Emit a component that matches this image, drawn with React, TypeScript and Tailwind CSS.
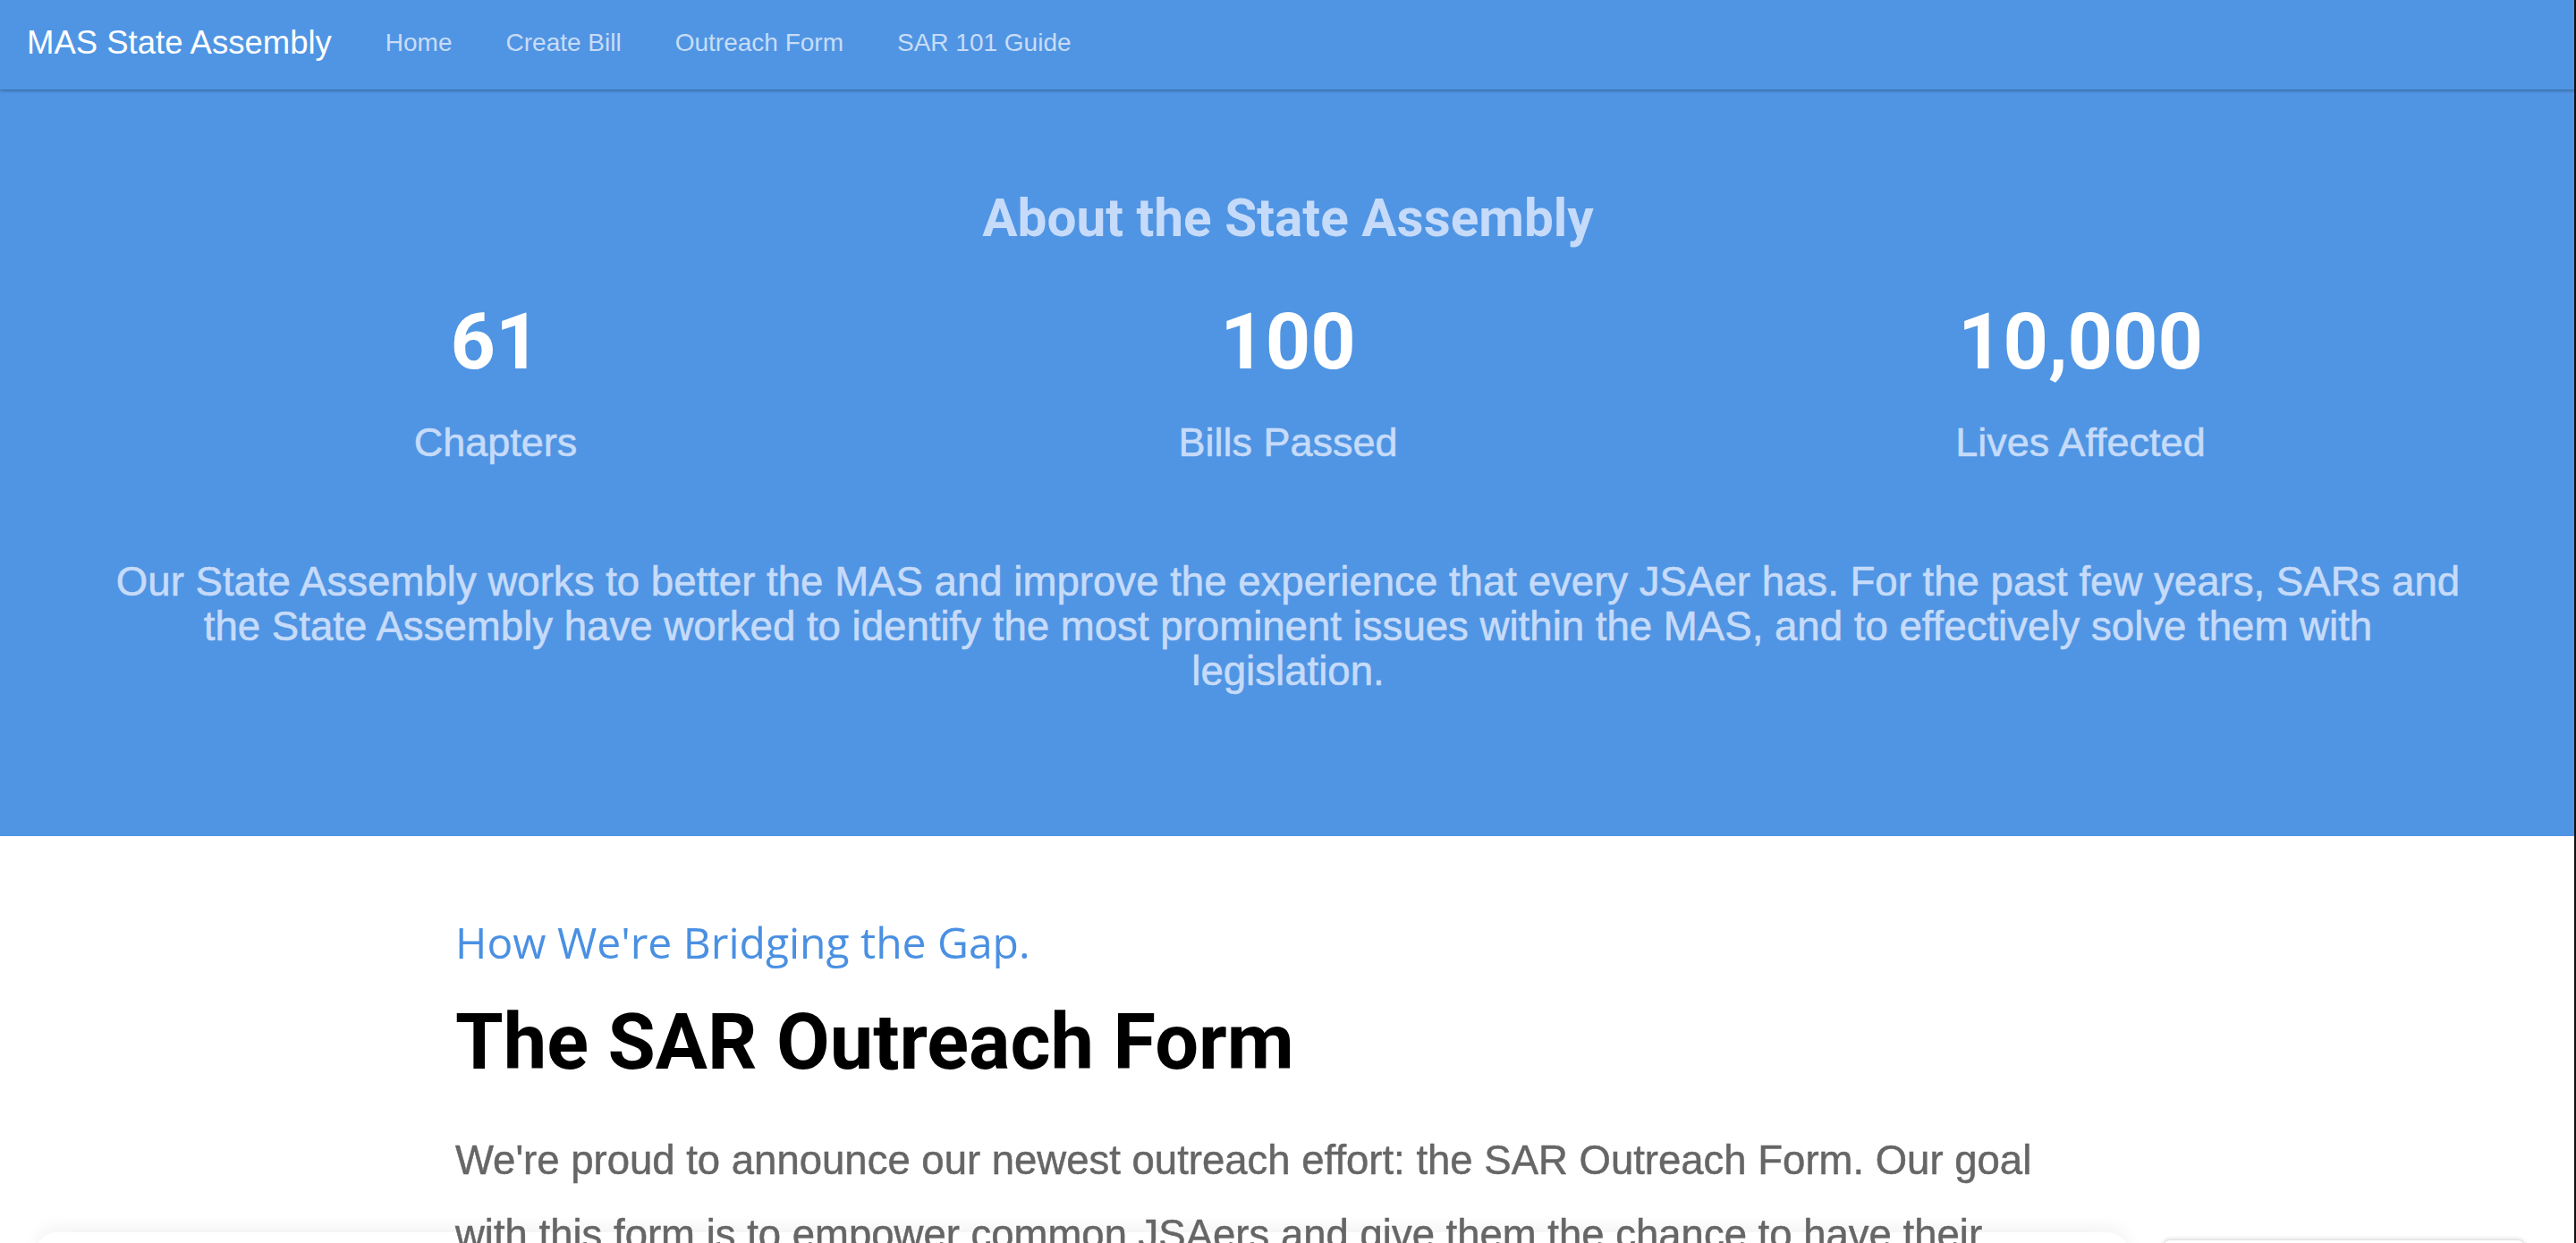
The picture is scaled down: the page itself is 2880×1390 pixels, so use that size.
import React from "react";

const links = ["Home", "Create Bill", "Outreach Form", "SAR 101 Guide"];

const stats = [
  { value: "61", label: "Chapters" },
  { value: "100", label: "Bills Passed" },
  { value: "10,000", label: "Lives Affected" },
];

export default function App() {
  return (
    <div className="min-h-screen bg-white font-['Liberation_Sans',Arial,sans-serif] overflow-hidden">
      {/* Navbar */}
      <nav className="relative z-10 h-[100px] pb-[4px] bg-[#5095e3] flex items-center shadow-[0_2px_3px_rgba(0,0,0,0.25)]">
        <a className="px-[30px] text-[36.5px] leading-[40px] text-white">MAS State Assembly</a>
        <ul className="flex">
          {links.map((l) => (
            <li key={l}>
              <a className="block px-[30px] text-[28px] leading-[40px] text-[#c8dcf7]">{l}</a>
            </li>
          ))}
        </ul>
      </nav>

      {/* Hero */}
      <section className="bg-[#5095e3] pt-[112px] pb-[159px]">
        <div className="w-[2658px] mx-auto text-center">
          <h2 className="font-['Roboto',sans-serif] font-bold text-[58.5px] leading-[1.1] text-[#c6dbfa]">
            About the State Assembly
          </h2>
          <div className="grid grid-cols-3 mt-[58px]">
            {stats.map((s) => (
              <div key={s.label}>
                <div className="font-['Roboto',sans-serif] font-bold text-[88px] leading-[1.1] text-white">
                  {s.value}
                </div>
                <div className="mt-[39px] text-[45px] leading-[1.1] text-[#c6dbfa] [-webkit-text-stroke:0.6px_currentColor]">
                  {s.label}
                </div>
              </div>
            ))}
          </div>
          <p className="mx-auto mt-[106px] w-[2636px] text-[45.6px] leading-[1.1] text-[#c6dbfa] [-webkit-text-stroke:0.6px_currentColor]">
            Our State Assembly works to better the MAS and improve the experience that every JSAer has. For the past few
            years, SARs and the State Assembly have worked to identify the most prominent issues within the MAS, and to
            effectively solve them with legislation.
          </p>
        </div>
      </section>

      {/* cards peeking in at the bottom edge, behind the text */}
      <div className="fixed left-[40px] top-[1378px] w-[2340px] h-[60px] rounded-[24px] bg-white shadow-[0_-6px_18px_rgba(0,0,0,0.05)]" />
      <div className="fixed left-[2418px] top-[1386px] w-[405px] h-[40px] rounded-[8px] bg-white border border-[#e2e2e2] shadow-[0_-1px_4px_rgba(0,0,0,0.12)]" />

      {/* Outreach form intro */}
      <section className="relative z-10 w-[1862px] mx-auto pt-[93px]">
        <p className="font-['Open_Sans',sans-serif] text-[48px] leading-[1.1] text-[#4a90e2]">
          How We're Bridging the Gap.
        </p>
        <h1 className="mt-[37px] font-['Roboto',sans-serif] font-bold text-[86.6px] leading-[1.1] text-black">
          The SAR Outreach Form
        </h1>
        <p className="mt-[43px] max-w-[1810px] text-[45.5px] leading-[83px] text-[#666] [-webkit-text-stroke:0.5px_currentColor]">
          We're proud to announce our newest outreach effort: the SAR Outreach Form. Our goal with this form is to
          empower common JSAers and give them the chance to have their voices heard.
        </p>
      </section>

      {/* window edge */}
      <div className="fixed top-0 right-0 z-20 w-[2px] h-screen bg-[#111]" />
    </div>
  );
}
